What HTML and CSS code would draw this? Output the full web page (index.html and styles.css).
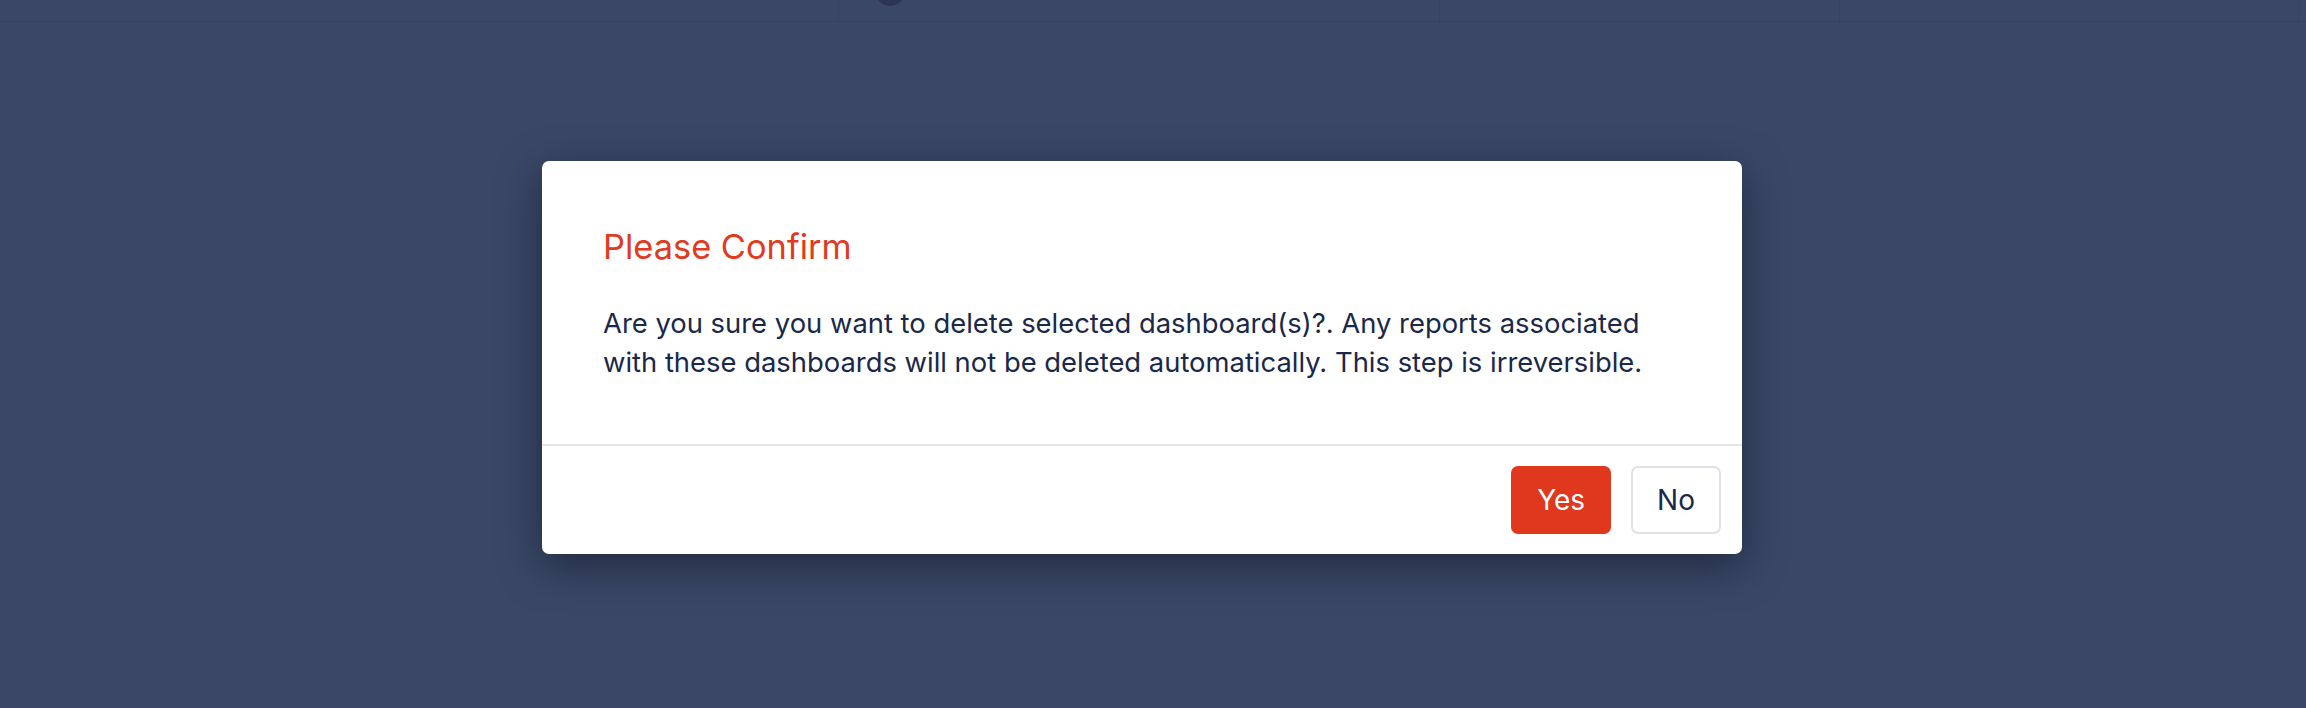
FILE: index.html
```html
<!DOCTYPE html>
<html lang="en">
<head>
  <meta charset="UTF-8">
  <meta name="viewport" content="width=device-width, initial-scale=1.0">
  <title>Dashboards</title>
  <link rel="stylesheet" href="styles.css">
</head>
<body>
  <!-- top bar, mostly hidden behind the backdrop -->
  <div class="topbar">
    <div class="cell cell-logo"></div>
    <div class="cell cell-user"><span class="avatar"></span></div>
    <div class="cell cell-mid"></div>
    <div class="cell cell-right"></div>
    <div class="cell cell-end"></div>
  </div>

  <div class="overlay">
    <div class="modal">
      <div class="modal-body">
        <h2 class="modal-title">Please Confirm</h2>
        <p class="modal-text">Are you sure you want to delete selected dashboard(s)?. Any reports associated with these dashboards will not be deleted automatically. This step is irreversible.</p>
      </div>
      <div class="modal-footer">
        <button class="btn btn-danger">Yes</button>
        <button class="btn btn-light">No</button>
      </div>
    </div>
  </div>
</body>
</html>
```

FILE: styles.css
```css
body {
  margin: 0;
  font-family: Inter, 'Noto Sans', sans-serif;
  background-color: #3a4866;
  height: 708px;
  overflow: hidden;
}
.topbar {
  display: flex;
  height: 21px;
  border-bottom: 1px solid #34425f;
}
.cell {
  border-right: 1px solid #36445f;
}
.cell-logo {
  width: 838px;
}
.cell-user {
  width: 600px;
  position: relative;
}
.avatar {
  position: absolute;
  left: 36px;
  top: -24px;
  width: 30px;
  height: 30px;
  border-radius: 50%;
  background-color: #2c3654;
}
.cell-mid {
  width: 399px;
}
.cell-right {
  width: 458px;
}
.cell-end {
  flex: 1;
  border-right: none;
}
.overlay {
  display: flex;
  justify-content: center;
  padding: 139px 22px 0 0;
}
.modal {
  width: 1200px;
  background-color: #ffffff;
  border-radius: 7px;
  box-shadow: 0 12px 40px rgba(15, 22, 40, 0.6);
}
.modal-body {
  padding: 66px 50px 62px 61px;
}
.modal-title {
  margin: 0 0 37px 0;
  font-size: 34.4px;
  line-height: 40px;
  font-weight: 400;
  color: #e03a1f;
}
.modal-text {
  margin: 0;
  font-size: 27.4px;
  line-height: 39px;
  color: #1a2849;
}
.modal-footer {
  display: flex;
  justify-content: flex-end;
  gap: 20px;
  padding: 20px 21px 20px 0;
  border-top: 2px solid #e6e6e8;
}
.btn {
  height: 68px;
  padding: 0 24px;
  font-family: inherit;
  font-size: 28px;
  border-radius: 7px;
  cursor: pointer;
}
.btn-danger {
  background-color: #e0381f;
  color: #ffffff;
  border: 2px solid #e0381f;
}
.btn-light {
  background-color: #ffffff;
  color: #1a2849;
  border: 2px solid #dfe1e7;
}
```
